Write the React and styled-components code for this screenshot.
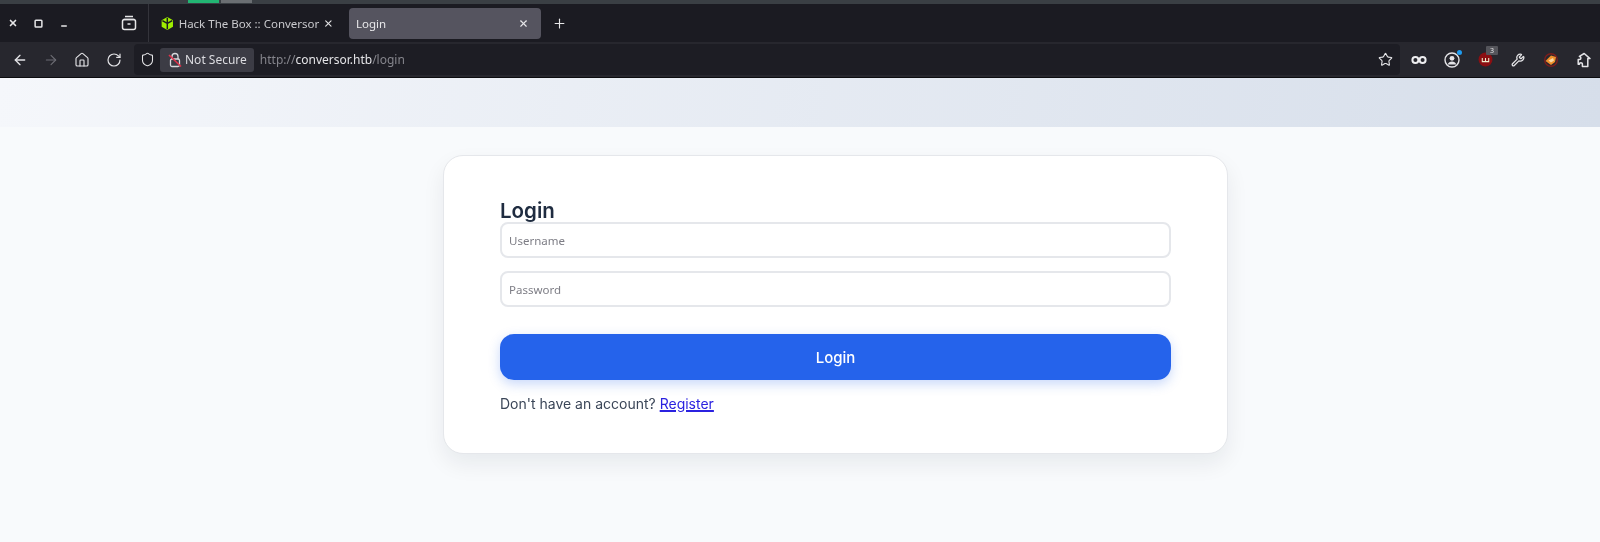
import React from "react";
import styled, { createGlobalStyle } from "styled-components";
import { ArrowLeft, ArrowRight, Home, RotateCw, Shield, Star, X, Plus, Minus, Square, Wrench } from "lucide-react";

const Global = createGlobalStyle`
  html, body { margin: 0; padding: 0; background: #f8fafc; }
  body { font-family: "Noto Sans", "Liberation Sans", sans-serif; overflow: hidden; }
`;

const Page = styled.div`
  width: 1600px;
  height: 542px;
  display: flex;
  flex-direction: column;
  overflow: hidden;
  filter: blur(0.6px);
`;

const TopStrip = styled.div`
  height: 4px;
  background: #3a3f44;
  display: flex;
  padding-left: 188px;
  gap: 2px;
`;

const Segment = styled.div`
  width: 31px;
  height: 3px;
  background: ${(p) => p.$color};
`;

const TabBar = styled.div`
  height: 38px;
  background: #1b1b22;
  display: flex;
  align-items: center;
  color: #e6e6e8;
`;

const WindowButtons = styled.div`
  width: 149px;
  height: 100%;
  display: flex;
  align-items: center;
  box-sizing: border-box;
  border-right: 1px solid #34343b;
`;

const WinBtn = styled.div`
  width: 25.5px;
  display: flex;
  justify-content: center;
  margin-left: ${(p) => p.$ml || 0}px;
`;

const Tab = styled.div`
  width: ${(p) => p.$w}px;
  height: 31px;
  margin-left: ${(p) => p.$ml || 0}px;
  border-radius: 4px;
  background: ${(p) => (p.$active ? "#55545f" : "transparent")};
  display: flex;
  align-items: center;
  padding: 0 12px 0 ${(p) => (p.$active ? 7 : 10)}px;
  box-sizing: border-box;
  gap: 4px;
`;

const TabTitle = styled.span`
  flex: 1;
  font-size: 11.5px;
  white-space: nowrap;
  color: ${(p) => (p.$active ? "#e8e8ea" : "#c9c9cd")};
`;

const NewTab = styled.div`
  margin-left: 11px;
  display: flex;
`;

const Toolbar = styled.div`
  height: 35px;
  background: #27272e;
  border-bottom: 1px solid #0c0c0f;
  display: flex;
  align-items: center;
  color: #e4e4e7;
`;

const NavGroup = styled.div`
  width: 134px;
  display: flex;
  align-items: center;
  padding-left: 12px;
  box-sizing: border-box;
  gap: 15.2px;
`;

const UrlBar = styled.div`
  width: 1266px;
  height: 31px;
  background: #1d1d24;
  border-radius: 4px;
  display: flex;
  align-items: center;
  padding-left: 6px;
  box-sizing: border-box;
`;

const SecureChip = styled.div`
  height: 24px;
  margin-left: 5px;
  padding: 0 7px 0 8px;
  background: #3c3c45;
  border-radius: 3px;
  display: flex;
  align-items: center;
  gap: 3px;
  font-size: 12px;
  color: #dcdce0;
`;

const Url = styled.div`
  margin-left: 6px;
  font-size: 12px;
  color: #85858c;
  b { font-weight: 400; color: #e4e4e7; }
`;

const StarSlot = styled.div`
  margin-left: auto;
  margin-right: 7px;
  display: flex;
`;

const Extensions = styled.div`
  flex: 1;
  display: flex;
  align-items: center;
  padding-left: 11px;
  gap: 17px;
`;

const Ext = styled.div`
  position: relative;
  width: 16px;
  height: 16px;
  display: flex;
  align-items: center;
  justify-content: center;
`;

const Badge = styled.span`
  position: absolute;
  top: -6px;
  right: -5px;
  width: 12px;
  height: 9px;
  background: #55555b;
  border-radius: 1px;
  font-size: 7px;
  line-height: 9px;
  text-align: center;
  color: #e4e4e7;
`;

const Dot = styled.span`
  position: absolute;
  top: -2px;
  right: -2px;
  width: 5px;
  height: 5px;
  border-radius: 50%;
  background: #1e9bf0;
`;

const Banner = styled.div`
  height: 49px;
  background: linear-gradient(100deg, #f5f7fb 0%, #d6deea 100%);
`;

const Main = styled.main`
  flex: 1;
  background: #f8fafc;
  padding-top: 28px;
  display: flex;
  justify-content: center;
  align-items: flex-start;
`;

const Card = styled.div`
  width: 785px;
  height: 299px;
  margin-left: 71px;
  box-sizing: border-box;
  padding: 44px 56px 0;
  background: #fff;
  border: 1px solid #e5e7eb;
  border-radius: 20px;
  box-shadow: 0 10px 22px rgba(15, 23, 42, 0.07);
`;

const Title = styled.h2`
  margin: 0;
  font-family: Inter, "Liberation Sans", sans-serif;
  font-size: 20.5px;
  font-weight: 600;
  line-height: 22px;
  color: #1f2c40;
`;

const Input = styled.input`
  display: block;
  width: 100%;
  height: 36px;
  margin-bottom: 13px;
  box-sizing: border-box;
  padding: 0 7px;
  background: #fff;
  border: 2px solid #e5e7eb;
  border-radius: 8px;
  font-family: "Noto Sans", sans-serif;
  font-size: 11.5px;
  outline: none;
  &::placeholder { color: #7d7d85; opacity: 1; }
`;

const Button = styled.button`
  display: block;
  width: 100%;
  height: 46px;
  margin-top: 27px;
  border: 0;
  border-radius: 14px;
  background: #2563eb;
  color: #fff;
  font-family: Inter, "Liberation Sans", sans-serif;
  font-size: 15px;
  font-weight: 500;
  box-shadow: 0 4px 12px rgba(37, 99, 235, 0.25);
`;

const Foot = styled.p`
  margin: 15px 0 0;
  font-family: Inter, "Liberation Sans", sans-serif;
  font-size: 14px;
  line-height: 18px;
  color: #3b4658;
  a { color: #2b22e0; text-decoration: underline; text-decoration-thickness: 2px; }
`;

const TabGroupsIcon = () => (
  <svg width="16" height="16" viewBox="0 0 16 16" fill="none" stroke="#e6e6e8" strokeWidth="1.5">
    <path d="M4 1.5h8" />
    <path d="M2.5 4.5h11" />
    <rect x="1.5" y="4.5" width="13" height="10" rx="2" />
    <path d="M6.5 9h3" />
  </svg>
);

const LockIcon = () => (
  <svg width="14" height="16" viewBox="0 0 14 16" fill="none">
    <path d="M4 7V4.5a3 3 0 0 1 6 0V7" stroke="#d8d8dc" strokeWidth="1.3" />
    <rect x="2.5" y="7" width="9" height="7.5" rx="1.5" stroke="#d8d8dc" strokeWidth="1.3" />
    <path d="M1 3l12 11.5" stroke="#e0324b" strokeWidth="1.6" />
  </svg>
);

const HtbIcon = () => (
  <svg width="15" height="15" viewBox="0 0 16 16">
    <path d="M8 1l6.2 3.5v7L8 15l-6.2-3.5v-7z" fill="#9fef00" />
    <path d="M8 1.8v5.7M2.6 4.8L8 7.8l5.4-3M8 7.8v6.4" stroke="#1b1b22" strokeWidth="1.6" fill="none" />
  </svg>
);

const InfinityIcon = () => (
  <svg width="16" height="10" viewBox="0 0 16 10" fill="none">
    <circle cx="4.4" cy="5" r="3" stroke="#eeeef0" strokeWidth="2" />
    <circle cx="11.6" cy="5" r="3" stroke="#eeeef0" strokeWidth="2" />
  </svg>
);

const AccountIcon = () => (
  <svg width="16" height="16" viewBox="0 0 16 16" fill="none">
    <circle cx="8" cy="8" r="7" stroke="#e4e4e7" strokeWidth="1.4" />
    <circle cx="8" cy="6.3" r="2.4" fill="#e4e4e7" />
    <path d="M3.6 12.6c.8-2.2 2.4-3.1 4.4-3.1s3.6.9 4.4 3.1" fill="#e4e4e7" />
  </svg>
);

const UblockIcon = () => (
  <svg width="15" height="15" viewBox="0 0 14 14">
    <circle cx="7" cy="7" r="6.5" fill="#8b0f12" />
    <path d="M4 5.5V9h6V5.5M7 5.5V9" stroke="#eec" strokeWidth="1" fill="none" />
  </svg>
);

const FoxIcon = () => (
  <svg width="16" height="16" viewBox="0 0 16 16">
    <circle cx="8" cy="8" r="7" fill="#7c1d1d" />
    <circle cx="8" cy="8" r="5.6" fill="#27272e" />
    <path d="M2.5 9L8 3.5 13 5l-1 5-4 3z" fill="#f0902a" />
    <path d="M5.5 8.5L10 6l1 2.5-3 2z" fill="#f7d9a8" />
  </svg>
);

const AddonsIcon = () => (
  <svg width="16" height="16" viewBox="0 0 16 16" fill="none" stroke="#e4e4e7" strokeWidth="1.5" strokeLinejoin="round">
    <path d="M8.2 1.5L14 6.6h-2.2V14.5H6.4v-2.3a1.5 1.5 0 0 0-3 0H2.2V7.4h1.2a1.5 1.5 0 0 0 0-3h0z" />
  </svg>
);

export default function App() {
  return (
    <Page>
      <Global />
      <TopStrip>
        <Segment $color="#22b573" />
        <Segment $color="#6b6f73" />
      </TopStrip>
      <TabBar>
        <WindowButtons>
          <WinBtn><X size={10} strokeWidth={4} /></WinBtn>
          <WinBtn><Square size={9} strokeWidth={4} /></WinBtn>
          <WinBtn><Minus size={8} strokeWidth={4} style={{ marginTop: 6 }} /></WinBtn>
          <WinBtn $ml={40}><TabGroupsIcon /></WinBtn>
        </WindowButtons>
        <Tab $w={196} $ml={1}>
          <HtbIcon />
          <TabTitle>Hack The Box :: Conversor</TabTitle>
          <X size={11} strokeWidth={2.5} />
        </Tab>
        <Tab $w={192} $ml={3} $active>
          <TabTitle $active>Login</TabTitle>
          <X size={11} strokeWidth={2.5} />
        </Tab>
        <NewTab><Plus size={15} strokeWidth={1.8} /></NewTab>
      </TabBar>
      <Toolbar>
        <NavGroup>
          <ArrowLeft size={16} strokeWidth={2} />
          <ArrowRight size={16} strokeWidth={1.6} color="#6d6d74" />
          <Home size={16} strokeWidth={1.7} />
          <RotateCw size={16} strokeWidth={1.8} />
        </NavGroup>
        <UrlBar>
          <Shield size={15} strokeWidth={1.7} />
          <SecureChip><LockIcon />Not Secure</SecureChip>
          <Url>http://<b>conversor.htb</b>/login</Url>
          <StarSlot><Star size={15} strokeWidth={1.8} /></StarSlot>
        </UrlBar>
        <Extensions>
          <Ext><InfinityIcon /></Ext>
          <Ext><AccountIcon /><Dot /></Ext>
          <Ext><UblockIcon /><Badge>3</Badge></Ext>
          <Ext><Wrench size={14} strokeWidth={2.2} /></Ext>
          <Ext><FoxIcon /></Ext>
          <Ext><AddonsIcon /></Ext>
        </Extensions>
      </Toolbar>
      <Banner />
      <Main>
        <Card>
          <Title>Login</Title>
          <Input placeholder="Username" />
          <Input placeholder="Password" />
          <Button>Login</Button>
          <Foot>Don't have an account? <a href="#register">Register</a></Foot>
        </Card>
      </Main>
    </Page>
  );
}
